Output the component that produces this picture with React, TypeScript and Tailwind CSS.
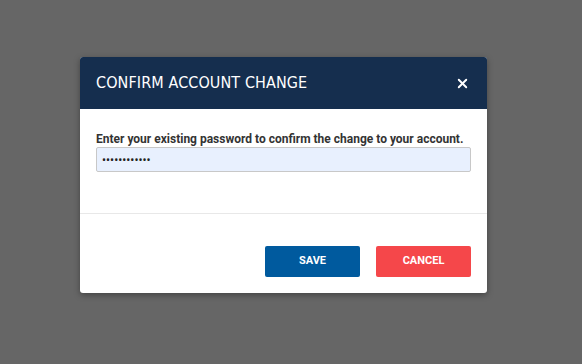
import { X } from "lucide-react";

export default function App() {
  return (
    <div className="h-[364px] w-[582px] bg-[#666666] pt-[57px] pl-[80px]" style={{ fontFamily: "Roboto, 'Liberation Sans', sans-serif" }}>
      <div className="flex h-[236px] w-[407px] flex-col overflow-hidden rounded-[3px] bg-white shadow-[0_2px_6px_rgba(0,0,0,0.35)]">
        <div className="flex h-[52px] items-center justify-between bg-[#152e4e] pl-4 pr-[17px]">
          <h2 className="text-[16px] tracking-[0.1px] text-white" style={{ fontFamily: "'DejaVu Sans Condensed', 'Roboto Condensed', sans-serif" }}>
            CONFIRM ACCOUNT CHANGE
          </h2>
          <X className="h-[15px] w-[15px] text-white" strokeWidth={3} />
        </div>
        <div className="flex h-[105px] flex-col border-b border-[#e8e8e8] px-4 pt-[23px]">
          <label className="text-[12px] font-bold leading-[15px] text-[#333333]">
            Enter your existing password to confirm the change to your account.
          </label>
          <input
            type="password"
            readOnly
            value="123456789012"
            className="h-[25px] w-[375px] rounded-[2px] border border-[#c8c8c8] bg-[#e8f0fe] px-[5px] text-[12px] text-[#222] outline-none"
          />
        </div>
        <div className="flex flex-1 items-start justify-end gap-4 px-4 pt-[32px]">
          <button className="h-[31px] w-[95px] rounded-[2px] bg-[#005a9e] text-[11px] font-bold text-white">SAVE</button>
          <button className="h-[31px] w-[95px] rounded-[2px] bg-[#f5474a] text-[11px] font-bold text-white">CANCEL</button>
        </div>
      </div>
    </div>
  );
}
